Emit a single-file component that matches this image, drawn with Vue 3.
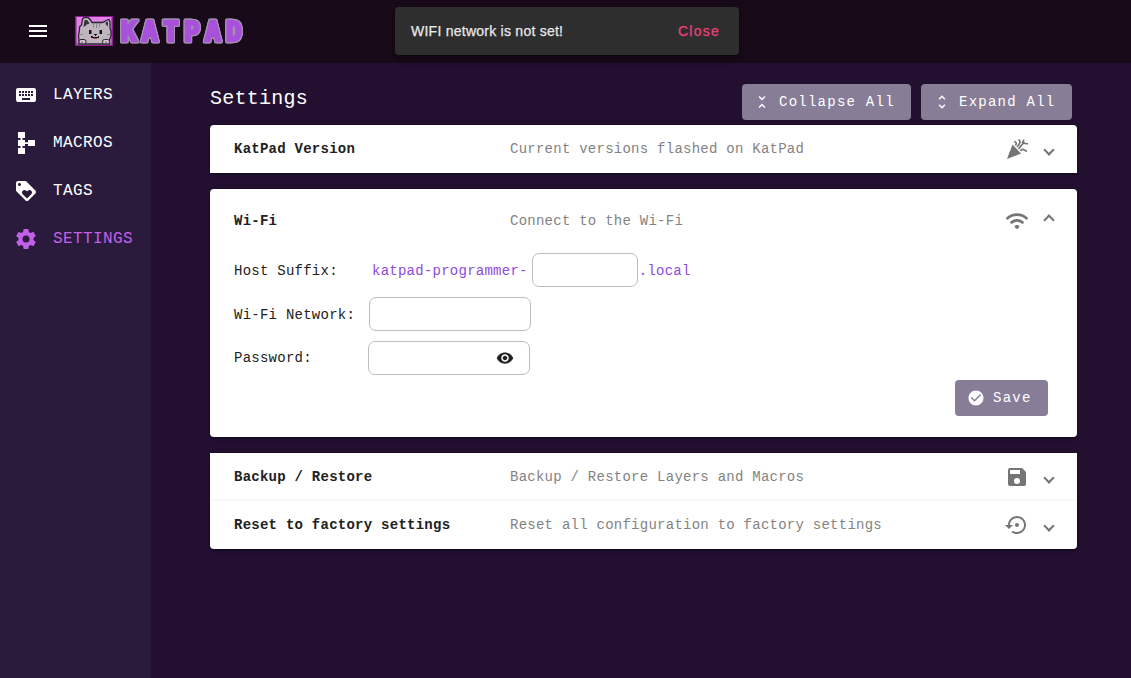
<script setup>
const I = {
  keyboard: 'M19 10h-2V8h2m0 5h-2v-2h2m-3-1h-2V8h2m0 5h-2v-2h2m0 6H8v-2h8m-9-5H5V8h2m0 5H5v-2h2m1 0h2v2H8m0-5h2v2H8m3 1h2v2h-2m0-5h2v2h-2m9-5H4a2 2 0 0 0-2 2v10a2 2 0 0 0 2 2h16a2 2 0 0 0 2-2V7a2 2 0 0 0-2-2z',
  macro: 'M4 1h7v6H8.500v2H11v2.200h3V9h7v6h-7v-2h-3v2H8.500v2H11v6H4v-6h2.500v-2H4V9h2.500V7H4z',
  tag: 'M21.410 11.580l-9-9C12.050 2.220 11.550 2 11 2H4c-1.100 0-2 .9-2 2v7c0 .55.22 1.050.59 1.420l9 9c.36.36.86.58 1.410.58.55 0 1.050-.22 1.410-.59l7-7c.37-.36.59-.86.59-1.410 0-.55-.23-1.060-.59-1.420zM5.500 7C4.670 7 4 6.330 4 5.500S4.670 4 5.500 4 7 4.670 7 5.500 6.330 7 5.500 7zm11.770 8.270L13 19.540l-4.270-4.270C8.280 14.810 8 14.190 8 13.500c0-1.380 1.120-2.500 2.500-2.500.69 0 1.320.28 1.770.74l.73.72.73-.73c.45-.45 1.080-.73 1.770-.73 1.380 0 2.500 1.120 2.500 2.500 0 .69-.28 1.320-.73 1.770z',
  cog: 'M12 15.500A3.500 3.500 0 0 1 8.500 12 3.500 3.500 0 0 1 12 8.500a3.500 3.500 0 0 1 3.500 3.500 3.500 3.500 0 0 1-3.500 3.500m7.430-2.530c.04-.32.07-.64.07-.97 0-.33-.03-.66-.07-1l2.110-1.630c.19-.15.24-.42.12-.64l-2-3.460c-.12-.22-.39-.31-.61-.22l-2.490 1c-.52-.39-1.060-.73-1.690-.98l-.37-2.650A.506.506 0 0 0 14 2h-4c-.25 0-.46.18-.5.42l-.37 2.650c-.63.25-1.170.59-1.690.98l-2.490-1c-.22-.09-.49 0-.61.22l-2 3.460c-.13.22-.07.49.12.64L4.570 11c-.04.34-.07.67-.07 1 0 .33.03.65.07.97l-2.110 1.660c-.19.15-.25.42-.12.64l2 3.460c.12.22.39.3.61.22l2.490-1.010c.52.4 1.060.74 1.690.99l.37 2.650c.04.24.25.42.5.42h4c.25 0 .46-.18.5-.42l.37-2.650c.63-.26 1.170-.59 1.690-.99l2.490 1.010c.22.08.49 0 .61-.22l2-3.460c.12-.22.07-.49-.12-.64l-2.110-1.660z',
  less: 'M7.410 18.590L8.830 20 12 16.830 15.170 20l1.410-1.410L12 14l-4.590 4.590zm9.180-13.180L15.170 4 12 7.170 8.830 4 7.410 5.410 12 10l4.590-4.590z',
  more: 'M12 5.830L15.170 9l1.410-1.410L12 3 7.410 7.590 8.830 9 12 5.830zm0 12.340L8.830 15l-1.410 1.410L12 21l4.590-4.590L15.170 15 12 18.170z',
  save: 'M17 3H5a2 2 0 0 0-2 2v14a2 2 0 0 0 2 2h14c1.100 0 2-.9 2-2V7l-4-4zm-5 16a3 3 0 1 1 0-6 3 3 0 0 1 0 6zm3-10H5V5h10v4z',
  restore: 'M14 12c0-1.100-.9-2-2-2s-2 .9-2 2 .9 2 2 2 2-.9 2-2zm-2-9c-4.970 0-9 4.030-9 9H0l4 4 4-4H5c0-3.870 3.130-7 7-7s7 3.130 7 7-3.130 7-7 7c-1.510 0-2.910-.49-4.060-1.300l-1.420 1.440C8.040 20.300 9.940 21 12 21c4.970 0 9-4.030 9-9s-4.030-9-9-9z',
  check: 'M12 2C6.480 2 2 6.480 2 12s4.480 10 10 10 10-4.480 10-10S17.520 2 12 2zm-2 15l-5-5 1.410-1.410L10 14.170l7.590-7.590L19 8l-9 9z',
  eye: 'M12 4.500C7 4.500 2.730 7.610 1 12c1.730 4.390 6 7.500 11 7.500s9.270-3.110 11-7.500c-1.730-4.390-6-7.500-11-7.500zM12 17c-2.760 0-5-2.240-5-5s2.240-5 5-5 5 2.240 5 5-2.240 5-5 5zm0-8c-1.660 0-3 1.340-3 3s1.340 3 3 3 3-1.340 3-3-1.340-3-3-3z'
}
const nav = [
  { label: 'LAYERS', icon: I.keyboard },
  { label: 'MACROS', icon: I.macro },
  { label: 'TAGS', icon: I.tag },
  { label: 'SETTINGS', icon: I.cog, active: true }
]
</script>

<template>
  <div class="app">
    <header class="bar">
      <svg class="burger" viewBox="0 0 18 12"><path d="M0 0h18v2H0zM0 5h18v2H0zM0 10h18v2H0z" /></svg>
      <svg class="cat" viewBox="0 0 38 30">
        <rect width="38" height="30" fill="#8c1d91" />
        <rect x="1.500" y="1" width="35" height="28" fill="#df83e5" />
        <path fill="#beb5bf" stroke="#2b2230" stroke-width="1.300" d="M4 27V24L3.500 20 4.500 14V11L6.500 9 7.500 3 9 1.500H13L15.500 4 17 6.500H27L29 6 31 4.500 34 3.500 35 6V12L36 15V20L34.500 24V28H4z" />
        <path fill="#3b3240" d="M9.500 4h2.500l2.500 3-1 1-2 .5-1.500 2-1.500 0zM31 6l2-.5v5l-2.500-2.500z" />
        <path fill="#8d838f" d="M18 7h1v4.500h-1zM21 7h1v5h-1zM24 7h1v4h-1zM5 18h3v1H5zM32 18h3v1h-3z" />
        <path fill="#19131c" d="M14 14h2.500v4H14zM24.500 14H27v4h-2.500zM19 18h3v1h-1v1h-1v-1h-1zM16 20h2v1h5v-1h1v2h-8z" />
        <path fill="#b3454f" d="M18 22h4v1h-4z" />
        <g fill="#d0c7d0" stroke="#2b2230">
          <rect x="4" y="23.500" width="7" height="4.500" rx="2" />
          <rect x="27.500" y="23.500" width="7" height="4.500" rx="2" />
        </g>
        <path fill="#514854" d="M6.500 25.500h1V28h-1zM30.500 25.500h1V28h-1zM1.500 27.500h35v1h-35z" />
      </svg>
      <svg class="word" viewBox="0 0 126 28">
        <text y="23.500" x="3 24 45 66 87 108">KATPAD</text>
      </svg>
    </header>

    <div class="body">
      <nav class="side">
        <a v-for="n in nav" :key="n.label" class="link" :class="{ active: n.active }">
          <svg class="i24" viewBox="0 0 24 24"><path :d="n.icon" /></svg><span>{{ n.label }}</span>
        </a>
      </nav>

      <main class="main">
        <div class="top">
          <h1>Settings</h1>
          <button class="btn collapse"><svg class="i18" viewBox="0 0 24 24"><path :d="I.less" /></svg>Collapse All</button>
          <button class="btn expand"><svg class="i18" viewBox="0 0 24 24"><path :d="I.more" /></svg>Expand All</button>
        </div>

        <section class="panel round-top">
          <div class="row">
            <b>KatPad Version</b><span class="desc">Current versions flashed on KatPad</span>
            <svg class="i24" viewBox="0 0 24 24">
              <path d="M7.500 7.500L16 16.500 2 22z" />
              <g fill="none" stroke="currentColor" stroke-width="1.700">
                <path d="M9 4.500c2 0 3 1.500 1.500 4M13.500 2.500c2.500 1.500 1.500 4.500-1.500 7.500M13.500 12C16.500 9 17 6 19.500 6.200c1.200.1 1.500 1 3.500.3M15.500 14c1-2 2.800-2.200 4-.8.6.6 1.200.9 2.500.9M18.800 2.500c0 1.500-.5 2.500-1.800 3.500" />
              </g>
            </svg>
            <i class="chev"></i>
          </div>
        </section>

        <section class="panel round-all open">
          <div class="row wifi-row">
            <b>Wi-Fi</b><span class="desc">Connect to the Wi-Fi</span>
            <svg class="i24" viewBox="0 0 24 24">
              <g fill="none" stroke="currentColor" stroke-width="2.700" stroke-linecap="round">
                <path d="M2.500 9.300c5.400-4.800 13.600-4.800 19 0M6.500 13.400c3.200-2.800 7.800-2.800 11 0" />
              </g>
              <path d="M9.500 17c1.500-1.200 3.500-1.200 5 0L13.800 18.500c-.6 1.900-3 1.900-3.600 0z" />
            </svg>
            <i class="chev up"></i>
          </div>
          <div class="field host">
            <label>Host Suffix:</label><span class="purple">katpad-programmer-</span><input class="short" type="text"><span class="purple">.local</span>
          </div>
          <div class="field net"><label>Wi-Fi Network:</label><input type="text"></div>
          <div class="field pass">
            <label>Password:</label>
            <div class="box"><svg class="i18" viewBox="0 0 24 24"><path :d="I.eye" /></svg></div>
          </div>
          <button class="btn save"><svg class="i18" viewBox="0 0 24 24"><path :d="I.check" /></svg>Save</button>
        </section>

        <section class="panel round-bottom">
          <div class="row">
            <b>Backup / Restore</b><span class="desc">Backup / Restore Layers and Macros</span>
            <svg class="i24" viewBox="0 0 24 24"><path :d="I.save" /></svg><i class="chev"></i>
          </div>
          <div class="row divided">
            <b>Reset to factory settings</b><span class="desc">Reset all configuration to factory settings</span>
            <svg class="i24" viewBox="0 0 24 24"><path :d="I.restore" /></svg><i class="chev"></i>
          </div>
        </section>
      </main>
    </div>

    <div class="snack"><span>WIFI network is not set!</span><button>Close</button></div>
  </div>
</template>

<style>
body { margin: 0; background: #230f30; overflow: hidden; }
</style>

<style scoped>
* { box-sizing: border-box; }
.app {
  position: relative; height: 678px; display: flex; flex-direction: column;
  background: #230f30; color: #212121;
  font: 14px/20px "Liberation Mono", monospace; letter-spacing: .25px;
}
svg { fill: currentColor; flex: none; display: block; }
.i24 { width: 24px; height: 24px; }
.i18 { width: 18px; height: 18px; }
.bar { height: 63px; background: #190a19; display: flex; align-items: center; padding: 0 0 1px 29px; color: #fff; flex: none; }
.burger { width: 18px; height: 12px; }
.cat { width: 38px; height: 30px; margin-left: 27.500px; }
.word { width: 126px; height: 28px; margin-left: 5px; overflow: visible; }
.word text {
  font: bold 26px "DejaVu Sans Mono", monospace; letter-spacing: 0;
  fill: #a851da; stroke: #a851da; stroke-width: 2.600px; stroke-linejoin: miter;
  filter: drop-shadow(1px 0 0 #a393ae) drop-shadow(-1px 0 0 #a393ae) drop-shadow(0 1px 0 #a393ae) drop-shadow(0 -1px 0 #a393ae);
}
.body { flex: 1; display: flex; }
.side { width: 151px; background: #2a1a3c; padding-top: 8px; border-right: 1px solid #28143a; }
.link { height: 48px; display: flex; align-items: center; padding-left: 14px; gap: 15px; color: #fff; font-size: 16px; letter-spacing: .4px; }
.link.active { color: #c360e8; }
.main { flex: 1; padding: 21px 54px 0 59px; }
.top { display: flex; height: 41px; }
h1 { margin: 0; flex: 1; font-size: 20px; font-weight: 400; line-height: 30px; letter-spacing: .25px; color: #fff; }
.btn {
  height: 36px; border: 0; border-radius: 4px; background: #877d96; color: #fff; padding: 0 0 0 12px;
  display: flex; align-items: center; font: 14px "Liberation Mono", monospace; letter-spacing: 1.250px;
}
.btn .i18 { margin-right: 8px; }
.collapse { width: 169px; margin-right: 10px; padding-left: 11px; }
.expand { width: 151px; margin-right: 5px; }
.panel { background: #fff; margin-bottom: 16px; box-shadow: 0 3px 1px -2px rgba(0,0,0,.2), 0 2px 2px rgba(0,0,0,.14), 0 1px 5px rgba(0,0,0,.12); }
.round-top { border-radius: 4px 4px 0 0; }
.round-all { border-radius: 4px; }
.round-bottom { border-radius: 0 0 4px 4px; }
.row { height: 48px; display: flex; align-items: center; padding: 0 24px; }
.row b { width: 276px; }
.desc { flex: 1; color: #838383; }
.row .i24 { color: #757575; margin-right: 16px; }
.divided { box-shadow: 0 -1px 2px rgba(0,0,0,.06); }
.chev { width: 8px; height: 8px; border: solid #757575; border-width: 0 2px 2px 0; transform: translateY(1px) rotate(45deg); }
.chev.up { transform: translateY(-1px) rotate(-135deg); }
.open { height: 248px; }
.wifi-row { height: 64px; }
.field { display: flex; align-items: center; height: 34px; padding-left: 24px; margin-bottom: 10px; }
.host label { width: 138px; }
.net label { width: 135px; }
.pass label { width: 134px; }
.host label, .host span, .net label { padding-top: 2px; }
.purple { color: #8e4bdc; }
input, .box { width: 162px; height: 34px; border: 1px solid #bdbdbd; border-radius: 7px; background: #fff; padding: 0 8px; }
.short { width: 106px; margin: 0 1px 0 4px; }
.box { display: flex; align-items: center; justify-content: flex-end; padding-right: 15px; }
.save { width: 93px; margin: -5px 29px 0 auto; }
.snack {
  position: absolute; left: 395px; top: 7px; width: 344px; height: 48px; border-radius: 4px; background: #2e2e2e;
  display: flex; align-items: center; justify-content: space-between; padding: 0 19px 0 16px;
  font-family: "Liberation Sans", Arial, sans-serif; color: #e8e8e8; box-shadow: 0 3px 8px rgba(0,0,0,.5);
}
.snack span { -webkit-text-stroke: .25px #e8e8e8; }
.snack button { border: 0; background: none; padding: 0; color: #ec407a; font: 14px "Liberation Sans", Arial, sans-serif; letter-spacing: 1.250px; -webkit-text-stroke: .25px #ec407a; }
</style>
